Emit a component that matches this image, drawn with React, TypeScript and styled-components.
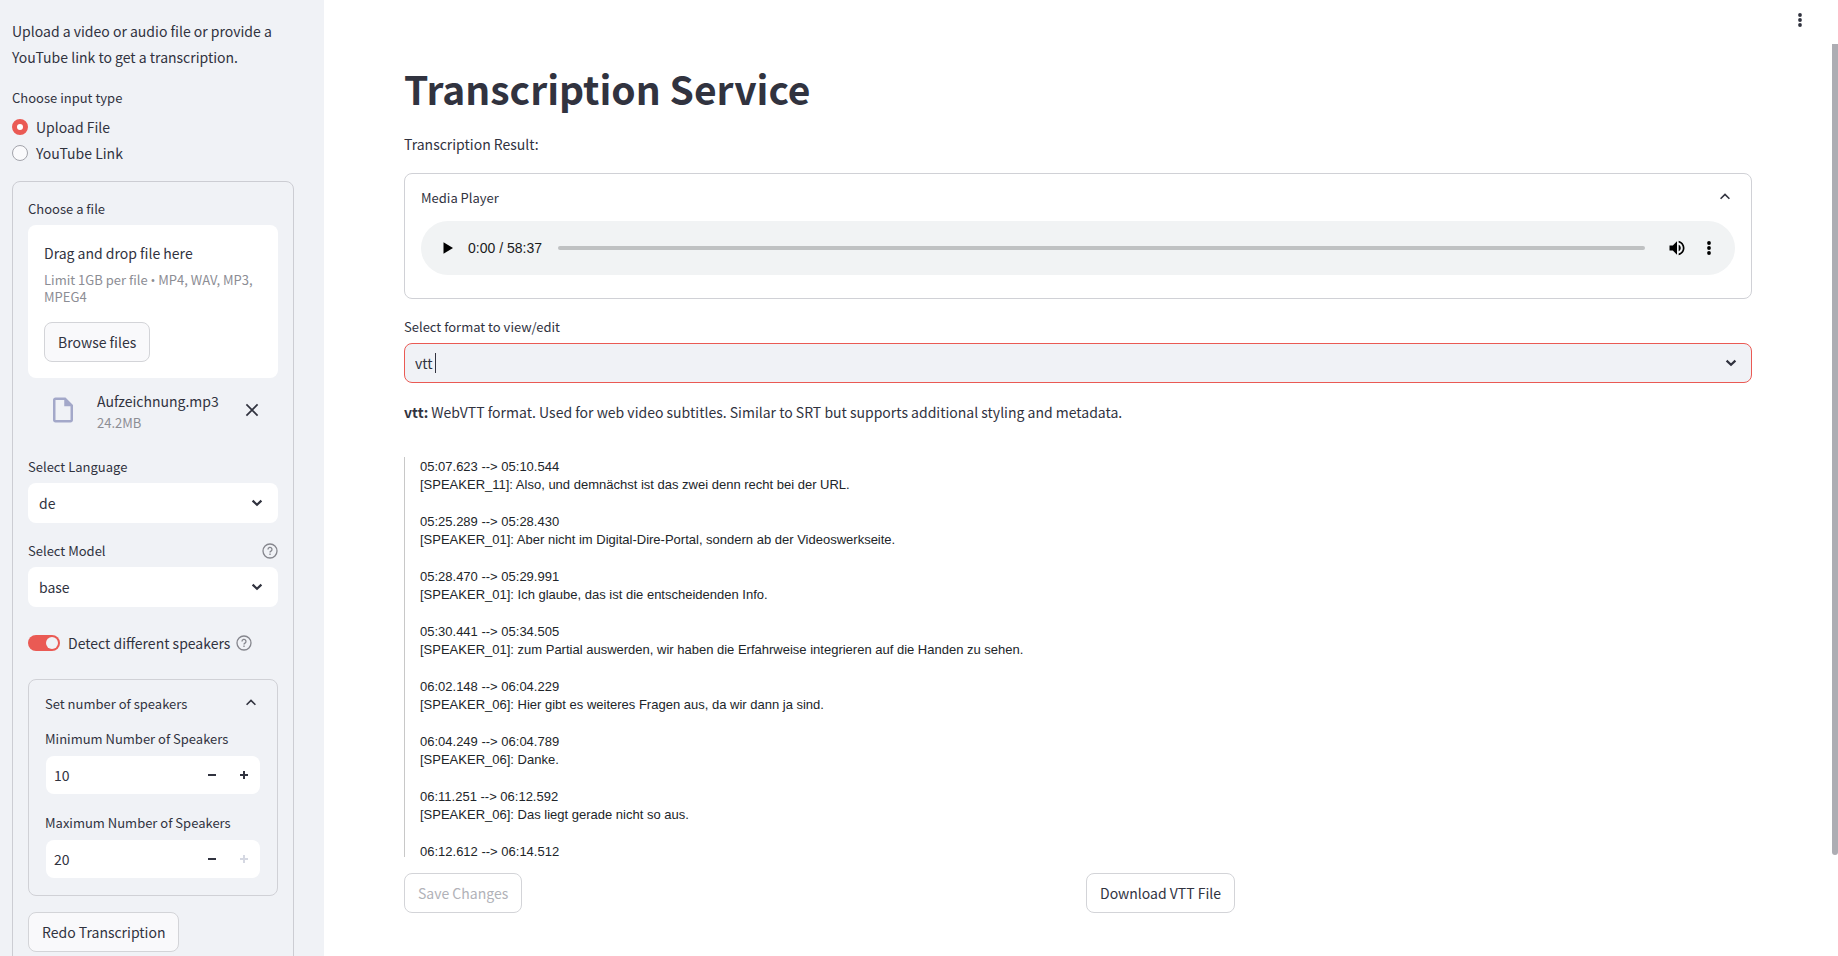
import React from "react";
import styled, { createGlobalStyle } from "styled-components";

const GlobalStyle = createGlobalStyle`
  *, *::before, *::after { box-sizing: border-box; }
  html, body, #root { height: 100%; }
  body {
    margin: 0;
    overflow: hidden;
    background: #ffffff;
    color: #31333f;
    font-family: "Noto Sans CJK SC", "Noto Sans", sans-serif;
    font-size: 14px;
    line-height: 26px;
  }
  button, input, select { font: inherit; color: inherit; }
  p, h1 { margin: 0; }
`;

const Page = styled.div`
  display: flex;
  height: 100vh;
  overflow: hidden;
`;

const Sidebar = styled.aside`
  flex: 0 0 324px;
  padding: 18px 30px 0 12px;
  overflow-y: auto;
  scrollbar-width: none;
  background: #f0f2f6;
`;

const Label = styled.label`
  display: block;
  font-size: 13px;
  line-height: 20px;
`;

const RadioGroup = styled.fieldset`
  margin: 18px 0 15px;
  padding: 0;
  border: 0;
`;

const Legend = styled.legend`
  padding: 0;
  margin-bottom: 6px;
  font-size: 13px;
  line-height: 20px;
`;

const RadioOption = styled.label`
  display: flex;
  align-items: center;
  gap: 8px;
`;

const Radio = styled.input`
  appearance: none;
  width: 16px;
  height: 16px;
  margin: 0;
  border: 1px solid #a3a4ab;
  border-radius: 50%;
  background: #fafafc;
  &:checked {
    border: 5px solid #ea5a54;
    background: #ffffff;
  }
`;

const Card = styled.form`
  display: flex;
  flex-direction: column;
  padding: 17px 15px 16px;
  border: 1px solid #cccdd3;
  border-radius: 8px;
`;

const Field = styled.div<{ $gap?: number }>`
  display: flex;
  flex-direction: column;
  gap: ${(p) => p.$gap ?? 6}px;
`;

const SelectFields = styled.div`
  display: flex;
  flex-direction: column;
  gap: 18px;
  margin-top: 15px;
`;

const LabelRow = styled.div`
  display: flex;
  align-items: center;
  justify-content: space-between;
`;

const DropZone = styled.section`
  display: flex;
  flex-direction: column;
  align-items: flex-start;
  padding: 16px;
  border-radius: 8px;
  background: #ffffff;
`;

const Muted = styled.small`
  display: block;
  font-size: 13px;
  line-height: 17px;
  color: #8c8d94;
`;

const DropHint = styled(Muted)`
  margin: 6px 0 17px;
`;

const Bullet = styled.span`
  font-family: "Open Sans", sans-serif;
  line-height: 1px;
`;

const DropTitle = styled.span`
  line-height: 24px;
`;

const Button = styled.button<{ $tinted?: boolean }>`
  height: 40px;
  padding: 0 13px;
  border: 1px solid #d3d4d8;
  border-radius: 8px;
  background: ${(p) => (p.$tinted ? "#f9f9fb" : "#ffffff")};
  white-space: nowrap;
  &:disabled { color: #b1b2b8; }
`;

const FileRow = styled.div`
  display: flex;
  align-items: center;
  height: 64px;
  padding: 0 16px 0 20px;
`;

const FileInfo = styled.div`
  flex: 1;
  margin-left: 19px;
`;

const FileName = styled.div`
  margin-bottom: 2px;
  line-height: 22px;
`;

const IconButton = styled.button`
  display: inline-flex;
  align-items: center;
  justify-content: center;
  padding: 0;
  border: 0;
  background: none;
  &:disabled { color: #d5d8e2; }
`;

const SelectBox = styled.div`
  display: grid;
  align-items: center;
  > * { grid-area: 1 / 1; }
  > svg { justify-self: end; margin-right: 11px; pointer-events: none; }
`;

const Select = styled.select`
  appearance: none;
  width: 100%;
  height: 40px;
  padding: 0 40px 0 11px;
  border: 0;
  border-radius: 8px;
  background: #ffffff;
`;

const ToggleRow = styled.div`
  display: flex;
  align-items: center;
  gap: 6px;
  margin: 23px 0;
`;

const ToggleLabel = styled.label`
  display: flex;
  align-items: center;
  gap: 8px;
`;

const Toggle = styled.input`
  appearance: none;
  display: flex;
  justify-content: flex-end;
  width: 32px;
  height: 16px;
  margin: 0;
  padding: 2px;
  border-radius: 8px;
  background: #ea5a54;
  &::before {
    content: "";
    width: 12px;
    height: 12px;
    border-radius: 50%;
    background: #f0f2f6;
  }
`;

const Expander = styled.section`
  padding: 0 16px 17px;
  border: 1px solid #d0d1d6;
  border-radius: 8px;
`;

const ExpanderHeader = styled.button`
  display: flex;
  align-items: center;
  justify-content: space-between;
  width: 100%;
  height: 47px;
  padding: 0;
  border: 0;
  background: none;
  font-size: 13px;
  text-align: left;
`;

const NumberStack = styled.div`
  display: flex;
  flex-direction: column;
  gap: 19px;
  padding-top: 2px;
`;

const NumberBox = styled.div`
  display: flex;
  height: 38px;
  margin: 0 1px;
  border-radius: 8px;
  background: #ffffff;
  overflow: hidden;
  ${IconButton} { flex: 0 0 32px; }
`;

const NumberInput = styled.input`
  appearance: textfield;
  flex: 1;
  min-width: 0;
  padding: 0 8px;
  border: 0;
  background: none;
  &::-webkit-inner-spin-button { appearance: none; }
`;

const SubmitRow = styled.div`
  margin-top: 16px;
`;

const Main = styled.main`
  position: relative;
  flex: 1;
  min-width: 0;
  padding: 0 86px 0 80px;
`;

const MenuButton = styled(IconButton)`
  position: absolute;
  top: 8px;
  right: 26px;
  width: 24px;
  height: 24px;
`;

const ScrollThumb = styled.div`
  position: absolute;
  top: 44px;
  right: 0;
  width: 6px;
  height: calc(85% - 2px);
  border-radius: 0 0 3px 3px;
  background: #adadb3;
`;

const Title = styled.h1`
  padding-top: 61px;
  font-size: 39px;
  font-weight: 700;
  line-height: 54px;
`;

const ResultText = styled.p`
  margin: 16px 0;
`;

const AudioBar = styled.div`
  display: flex;
  align-items: center;
  height: 54px;
  padding: 0 10px;
  border-radius: 27px;
  background: #f1f3f4;
  color: #000000;
  ${IconButton} { flex: 0 0 32px; height: 32px; }
`;

const MediaExpander = styled(Expander)`
  padding-bottom: 23px;
`;

const Time = styled.span`
  margin: 0 16px 0 5px;
  font-family: "Liberation Sans", Arial, sans-serif;
  font-size: 14px;
  color: #1b1b1c;
`;

const Seek = styled.input`
  appearance: none;
  flex: 1;
  min-width: 0;
  height: 4px;
  margin: 0 16px 0 0;
  border-radius: 2px;
  background: #bfc1c2;
  &::-webkit-slider-thumb { appearance: none; width: 0; height: 0; }
`;

const FormatField = styled(Field)`
  margin: 18px 0 16px;
`;

const ComboBox = styled.div`
  display: flex;
  align-items: center;
  height: 40px;
  padding: 0 10px;
  border: 1px solid #ea5a54;
  border-radius: 8px;
  background: #f0f2f6;
  > svg { margin-left: auto; }
`;

const ComboInput = styled.input`
  width: 20px;
  padding: 0;
  border: 0;
  outline: 0;
  background: none;
`;

const Caret = styled.span`
  width: 1px;
  height: 20px;
  background: #31333f;
`;

const Transcript = styled.div`
  height: 400px;
  margin: 32px 0 16px;
  padding: 1px 0 0 15px;
  border-left: 1px solid #c8c8c8;
  overflow: hidden;
  outline: 0;
  color: #212529;
  font-family: "Liberation Sans", Arial, sans-serif;
  font-size: 13px;
  line-height: 18px;
`;

const Cue = styled.p`
  margin-bottom: 19px;
`;

const Actions = styled.div`
  display: grid;
  grid-template-columns: 1fr 1fr;
  gap: 16px;
  justify-items: start;
`;

const ChevronDown = () => (
  <svg width="20" height="20" viewBox="0 0 20 20" fill="none" stroke="#31333f" strokeWidth="2.2">
    <path d="M5.6 7.6 10 11.8 14.4 7.6" />
  </svg>
);

const ChevronUp = () => (
  <svg width="20" height="20" viewBox="0 0 20 20" fill="none" stroke="#31333f" strokeWidth="1.6">
    <path d="M5.6 10.8 10 6.4 14.4 10.8" />
  </svg>
);

const Help = () => (
  <svg width="16" height="16" viewBox="0 0 16 16" fill="none" stroke="#85868d" strokeWidth="1.3">
    <circle cx="8" cy="8" r="7" />
    <path d="M6 6.5a2 2 0 1 1 3 1.6c-.7.4-1 .7-1 1.3" />
    <path d="M8 10.6v1.4" />
  </svg>
);

const Dots = () => (
  <svg width="20" height="20" viewBox="0 0 20 20" fill="currentColor">
    <circle cx="10" cy="5" r="1.9" />
    <circle cx="10" cy="10" r="1.9" />
    <circle cx="10" cy="15" r="1.9" />
  </svg>
);

const FileIcon = () => (
  <svg width="30" height="30" viewBox="0 0 24 24" fill="#a3a8c9">
    <path d="M14 2H6c-1.1 0-1.99.9-1.99 2L4 20c0 1.1.89 2 1.99 2H18c1.1 0 2-.9 2-2V8l-6-6zM6 20V4h7v5h5v11H6z" />
  </svg>
);

const Cross = () => (
  <svg width="20" height="20" viewBox="0 0 20 20" fill="none" stroke="#31333f" strokeWidth="1.7">
    <path d="M4.4 4.4 15.6 15.6M15.6 4.4 4.4 15.6" />
  </svg>
);

const Minus = () => (
  <svg width="8" height="8" viewBox="0 0 8 8" fill="currentColor">
    <path d="M0 3h8v2H0z" />
  </svg>
);

const Plus = () => (
  <svg width="8" height="8" viewBox="0 0 8 8" fill="currentColor">
    <path d="M3 0h2v3h3v2H5v3H3V5H0V3h3z" />
  </svg>
);

const Play = () => (
  <svg width="20" height="20" viewBox="0 0 20 20" fill="currentColor">
    <path d="M6.5 4.2v11.6L16 10z" />
  </svg>
);

const Volume = () => (
  <svg width="20" height="20" viewBox="0 0 24 24" fill="currentColor">
    <path d="M3 9v6h4l5 5V4L7 9H3zm13.5 3c0-1.77-1.02-3.29-2.5-4.03v8.05c1.48-.73 2.5-2.25 2.5-4.02zM14 3.23v2.06c2.89.86 5 3.54 5 6.71s-2.11 5.85-5 6.71v2.06c4.01-.91 7-4.49 7-8.77s-2.99-7.86-7-8.77z" />
  </svg>
);

const cues = [
  ["05:07.623 --> 05:10.544", "[SPEAKER_11]: Also, und demnächst ist das zwei denn recht bei der URL."],
  ["05:25.289 --> 05:28.430", "[SPEAKER_01]: Aber nicht im Digital-Dire-Portal, sondern ab der Videoswerkseite."],
  ["05:28.470 --> 05:29.991", "[SPEAKER_01]: Ich glaube, das ist die entscheidenden Info."],
  ["05:30.441 --> 05:34.505", "[SPEAKER_01]: zum Partial auswerden, wir haben die Erfahrweise integrieren auf die Handen zu sehen."],
  ["06:02.148 --> 06:04.229", "[SPEAKER_06]: Hier gibt es weiteres Fragen aus, da wir dann ja sind."],
  ["06:04.249 --> 06:04.789", "[SPEAKER_06]: Danke."],
  ["06:11.251 --> 06:12.592", "[SPEAKER_06]: Das liegt gerade nicht so aus."],
  ["06:12.612 --> 06:14.512", ""],
];

function NumberField({ id, label, value, atMax }: { id: string; label: string; value: number; atMax?: boolean }) {
  return (
    <Field $gap={7}>
      <Label htmlFor={id}>{label}</Label>
      <NumberBox>
        <NumberInput id={id} type="number" defaultValue={value} />
        <IconButton type="button" aria-label="Decrease"><Minus /></IconButton>
        <IconButton type="button" aria-label="Increase" disabled={atMax}><Plus /></IconButton>
      </NumberBox>
    </Field>
  );
}

export default function App() {
  return (
    <Page>
      <GlobalStyle />
      <Sidebar>
        <p>Upload a video or audio file or provide a YouTube link to get a transcription.</p>
        <RadioGroup>
          <Legend>Choose input type</Legend>
          <RadioOption><Radio type="radio" name="source" defaultChecked />Upload File</RadioOption>
          <RadioOption><Radio type="radio" name="source" />YouTube Link</RadioOption>
        </RadioGroup>
        <Card>
          <Field>
            <Label as="span">Choose a file</Label>
            <DropZone>
              <DropTitle>Drag and drop file here</DropTitle>
              <DropHint>Limit 1GB per file <Bullet>•</Bullet> MP4, WAV, MP3, MPEG4</DropHint>
              <Button type="button" $tinted>Browse files</Button>
            </DropZone>
          </Field>
          <FileRow>
            <FileIcon />
            <FileInfo>
              <FileName>Aufzeichnung.mp3</FileName>
              <Muted>24.2MB</Muted>
            </FileInfo>
            <IconButton type="button" aria-label="Remove file"><Cross /></IconButton>
          </FileRow>
          <SelectFields>
            <Field>
              <Label htmlFor="language">Select Language</Label>
              <SelectBox>
                <Select id="language"><option>de</option></Select>
                <ChevronDown />
              </SelectBox>
            </Field>
            <Field>
              <LabelRow>
                <Label htmlFor="model">Select Model</Label>
                <Help />
              </LabelRow>
              <SelectBox>
                <Select id="model"><option>base</option></Select>
                <ChevronDown />
              </SelectBox>
            </Field>
          </SelectFields>
          <ToggleRow>
            <ToggleLabel>
              <Toggle type="checkbox" role="switch" defaultChecked />
              Detect different speakers
            </ToggleLabel>
            <Help />
          </ToggleRow>
          <Expander>
            <ExpanderHeader type="button" aria-expanded="true">Set number of speakers<ChevronUp /></ExpanderHeader>
            <NumberStack>
              <NumberField id="min" label="Minimum Number of Speakers" value={10} />
              <NumberField id="max" label="Maximum Number of Speakers" value={20} atMax />
            </NumberStack>
          </Expander>
          <SubmitRow><Button type="button" $tinted>Redo Transcription</Button></SubmitRow>
        </Card>
      </Sidebar>
      <Main>
        <MenuButton type="button" aria-label="Main menu"><Dots /></MenuButton>
        <Title>Transcription Service</Title>
        <ResultText>Transcription Result:</ResultText>
        <MediaExpander>
          <ExpanderHeader type="button" aria-expanded="true">Media Player<ChevronUp /></ExpanderHeader>
          <AudioBar>
            <IconButton type="button" aria-label="Play"><Play /></IconButton>
            <Time>0:00 / 58:37</Time>
            <Seek type="range" aria-label="Position" defaultValue={0} />
            <IconButton type="button" aria-label="Mute"><Volume /></IconButton>
            <IconButton type="button" aria-label="More options"><Dots /></IconButton>
          </AudioBar>
        </MediaExpander>
        <FormatField>
          <Label htmlFor="format">Select format to view/edit</Label>
          <ComboBox>
            <ComboInput id="format" role="combobox" aria-expanded="false" defaultValue="vtt" />
            <Caret />
            <ChevronDown />
          </ComboBox>
        </FormatField>
        <p><strong>vtt:</strong> WebVTT format. Used for web video subtitles. Similar to SRT but supports additional styling and metadata.</p>
        <Transcript role="textbox" aria-label="Transcript" contentEditable suppressContentEditableWarning>
          {cues.map(([time, text]) => (
            <Cue key={time}>{time}<br />{text}</Cue>
          ))}
        </Transcript>
        <Actions>
          <Button type="button" disabled>Save Changes</Button>
          <Button type="button">Download VTT File</Button>
        </Actions>
        <ScrollThumb />
      </Main>
    </Page>
  );
}
